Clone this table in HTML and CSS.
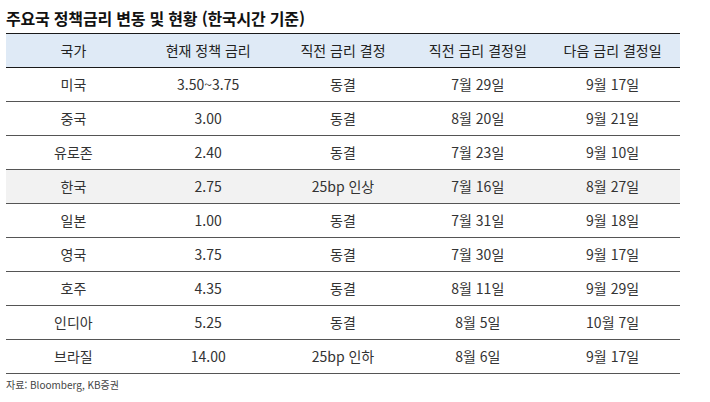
FILE: index.html
```html
<!DOCTYPE html>
<html lang="ko">
<head>
<meta charset="utf-8">
<link rel="stylesheet" href="styles.css">
</head>
<body>
<div class="page">
  <h1 class="title">주요국 정책금리 변동 및 현황 (한국시간 기준)</h1>
  <table class="rates">
    <thead>
      <tr><th>국가</th><th>현재 정책 금리</th><th>직전 금리 결정</th><th>직전 금리 결정일</th><th>다음 금리 결정일</th></tr>
    </thead>
    <tbody>
      <tr><td>미국</td><td>3.50~3.75</td><td>동결</td><td>7월 29일</td><td>9월 17일</td></tr>
      <tr><td>중국</td><td>3.00</td><td>동결</td><td>8월 20일</td><td>9월 21일</td></tr>
      <tr><td>유로존</td><td>2.40</td><td>동결</td><td>7월 23일</td><td>9월 10일</td></tr>
      <tr class="hl"><td>한국</td><td>2.75</td><td>25bp 인상</td><td>7월 16일</td><td>8월 27일</td></tr>
      <tr><td>일본</td><td>1.00</td><td>동결</td><td>7월 31일</td><td>9월 18일</td></tr>
      <tr><td>영국</td><td>3.75</td><td>동결</td><td>7월 30일</td><td>9월 17일</td></tr>
      <tr><td>호주</td><td>4.35</td><td>동결</td><td>8월 11일</td><td>9월 29일</td></tr>
      <tr><td>인디아</td><td>5.25</td><td>동결</td><td>8월 5일</td><td>10월 7일</td></tr>
      <tr><td>브라질</td><td>14.00</td><td>25bp 인하</td><td>8월 6일</td><td>9월 17일</td></tr>
    </tbody>
  </table>
  <p class="source">자료: Bloomberg, KB증권</p>
</div>
</body>
</html>
```

FILE: styles.css
```css
html, body {
  margin: 0;
  padding: 0;
  background: #fff;
}
body {
  font-family: "Noto Sans CJK KR", "Noto Sans", sans-serif;
  color: #333;
}
.page {
  padding: 8px 0 0 6px;
  width: 674px;
}
.title {
  margin: 0;
  font-size: 16px;
  font-weight: 700;
  line-height: 20px;
  height: 25px;
  color: #111;
  letter-spacing: -0.2px;
}
.rates {
  width: 674px;
  border-collapse: collapse;
  table-layout: fixed;
  font-size: 14px;
}
.rates th, .rates td {
  text-align: center;
  padding: 0;
  height: 33px;
  line-height: 33px;
}
.rates thead th {
  background: #dfeaf6;
  font-weight: 400;
  color: #222;
  border-top: 1px solid #1a1a1a;
  border-bottom: 1px solid #1a1a1a;
}
.rates tbody td {
  border-bottom: 1px solid #555;
  color: #333;
}
.rates tbody tr.hl td {
  background: #f2f2f2;
}
.source {
  margin: 4px 0 0;
  font-size: 10px;
  line-height: 14px;
  color: #444;
}
```
